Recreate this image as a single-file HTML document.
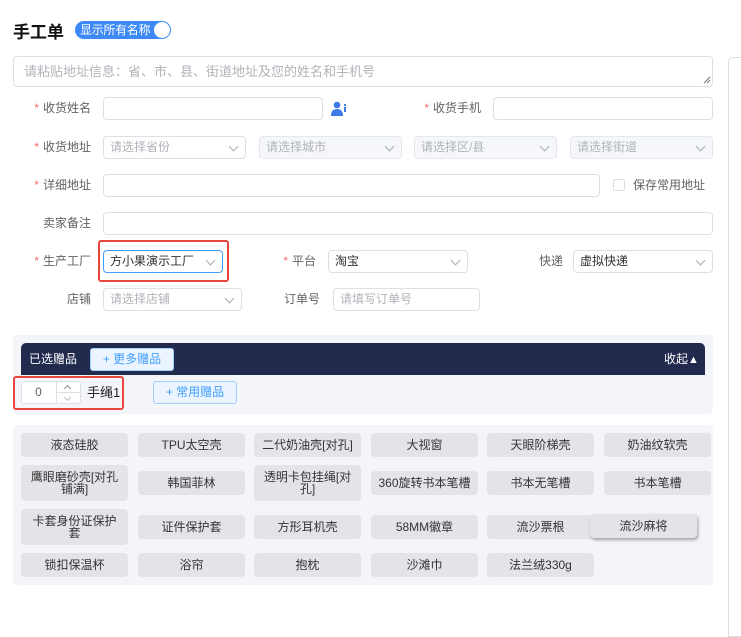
<!DOCTYPE html>
<html><head><meta charset="utf-8"><style>
*{box-sizing:border-box;margin:0;padding:0}
body{width:741px;height:621px;background:#fff;font-family:"Liberation Sans","Noto Sans CJK SC",sans-serif;position:relative;overflow:hidden;color:#606266;font-size:12px}
.a{position:absolute}
.inp{position:absolute;height:23px;border:1px solid #dcdfe6;border-radius:4px;background:#fff;font-size:12px;color:#b0b3b9;padding-left:6px;line-height:21px}
.dis{background:#f5f7fa;border-color:#e4e7ed}
.arr{position:absolute;right:8px;top:6px;width:7px;height:7px;border-right:1px solid #a8abb2;border-bottom:1px solid #a8abb2;transform:rotate(45deg)}
.lbl{position:absolute;text-align:right;font-size:12px;color:#606266;line-height:23px}
.lbl b{color:#f56c6c;font-weight:normal;margin-right:4px}
.tag{position:absolute;width:107px;background:#e3e4e9;border-radius:4px;font-size:12px;color:#333;display:flex;align-items:center;justify-content:center;text-align:center;line-height:12px;padding:0 6px}
.btn{position:absolute;height:23px;background:#ecf5ff;border:1px solid #a0cfff;border-radius:3px;color:#409eff;font-size:12px;text-align:center;line-height:21px}
</style></head><body>
<div class="a" style="left:13px;top:18px;font-size:17px;font-weight:bold;color:#111">手工单</div>
<div class="a" style="left:75px;top:21px;width:96px;height:18px;background:#3d8af7;border-radius:9px;color:#fff;font-size:12px;line-height:18px;padding-left:5px;letter-spacing:-0.3px">显示所有名称</div>
<div class="a" style="left:154px;top:22px;width:16px;height:16px;border-radius:50%;background:#fff"></div>

<div class="inp" style="left:13px;top:56px;width:700px;height:31px;line-height:29px;font-size:13px;padding-left:10px">请粘贴地址信息：省、市、县、街道地址及您的姓名和手机号</div>
<svg class="a" style="left:703px;top:76px" width="8" height="8"><path d="M1 7L7 1M4 7L7 4" stroke="#777" stroke-width="1"/></svg>
<div class="a" style="left:728px;top:57px;width:20px;height:580px;border:1px solid #dcdfe6;border-radius:5px 0 0 0"></div>

<div class="lbl" style="left:0;width:91px;top:97px"><b>*</b>收货姓名</div>
<div class="inp" style="left:103px;top:97px;width:220px"></div>
<svg class="a" style="left:331px;top:101px" width="16" height="16" viewBox="0 0 16 16"><circle cx="6" cy="4" r="3.3" fill="#3d7be8"/><path d="M0 15 Q0 8 6 8 Q12 8 12 15Z" fill="#3d7be8"/><rect x="13" y="3" width="2" height="2" fill="#3d7be8"/><rect x="13" y="6" width="2" height="5" fill="#3d7be8"/></svg>
<div class="lbl" style="left:400px;width:81px;top:97px"><b>*</b>收货手机</div>
<div class="inp" style="left:493px;top:97px;width:220px"></div>

<div class="lbl" style="left:0;width:91px;top:136px"><b>*</b>收货地址</div>
<div class="inp" style="left:103px;top:136px;width:143px">请选择省份<i class="arr"></i></div>
<div class="inp dis" style="left:259px;top:136px;width:143px">请选择城市<i class="arr"></i></div>
<div class="inp dis" style="left:414px;top:136px;width:143px">请选择区/县<i class="arr"></i></div>
<div class="inp dis" style="left:570px;top:136px;width:143px">请选择街道<i class="arr"></i></div>

<div class="lbl" style="left:0;width:91px;top:174px"><b>*</b>详细地址</div>
<div class="inp" style="left:103px;top:174px;width:497px"></div>
<div class="a" style="left:613px;top:179px;width:12px;height:12px;border:1px solid #dcdfe6;border-radius:2px"></div>
<div class="a" style="left:633px;top:174px;line-height:23px">保存常用地址</div>

<div class="lbl" style="left:0;width:91px;top:212px">卖家备注</div>
<div class="inp" style="left:103px;top:212px;width:610px"></div>

<div class="lbl" style="left:0;width:91px;top:250px"><b>*</b>生产工厂</div>
<div class="a" style="left:98px;top:240px;width:131px;height:42px;border:2px solid #e8453c;border-radius:3px"></div>
<div class="inp" style="left:103px;top:250px;width:120px;border-color:#409eff;color:#303133">方小果演示工厂<i class="arr"></i></div>
<div class="lbl" style="left:260px;width:56px;top:250px"><b>*</b>平台</div>
<div class="inp" style="left:328px;top:250px;width:140px;color:#303133">淘宝<i class="arr"></i></div>
<div class="lbl" style="left:520px;width:43px;top:250px">快递</div>
<div class="inp" style="left:573px;top:250px;width:140px;color:#303133">虚拟快递<i class="arr"></i></div>

<div class="lbl" style="left:0;width:91px;top:288px">店铺</div>
<div class="inp" style="left:103px;top:288px;width:139px">请选择店铺<i class="arr"></i></div>
<div class="lbl" style="left:260px;width:60px;top:288px">订单号</div>
<div class="inp" style="left:333px;top:288px;width:147px">请填写订单号</div>

<div class="a" style="left:13px;top:335px;width:700px;height:79px;background:#f4f5f9;border-radius:5px"></div>
<div class="a" style="left:21px;top:343px;width:684px;height:32px;background:#222a4e;border-radius:5px 5px 0 0"></div>
<div class="a" style="left:29px;top:343px;line-height:32px;color:#fff">已选赠品</div>
<div class="btn" style="left:90px;top:348px;width:84px">+ 更多赠品</div>
<div class="a" style="left:664px;top:343px;line-height:32px;color:#fff">收起<span style="font-size:11px">▲</span></div>
<div class="a" style="left:13px;top:376px;width:111px;height:34px;border:2px solid #e8453c;border-radius:3px"></div>
<div class="a" style="left:21px;top:381px;width:60px;height:23px;border:1px solid #dcdfe6;border-radius:3px;background:#fff"></div>
<div class="a" style="left:21px;top:381px;width:35px;line-height:23px;text-align:center;color:#606266">0</div>
<div class="a" style="left:56px;top:381px;width:1px;height:23px;background:#dcdfe6"></div>
<div class="a" style="left:57px;top:392px;width:23px;height:1px;background:#dcdfe6"></div>
<div class="a" style="left:65px;top:386px;width:5px;height:5px;border-left:1px solid #888;border-top:1px solid #888;transform:rotate(45deg)"></div>
<div class="a" style="left:65px;top:395px;width:5px;height:5px;border-right:1px solid #bbb;border-bottom:1px solid #bbb;transform:rotate(45deg)"></div>
<div class="a" style="left:87px;top:381px;line-height:23px;color:#222;font-size:13px">手绳1</div>
<div class="btn" style="left:153px;top:381px;width:84px">+ 常用赠品</div>

<div class="a" style="left:13px;top:425px;width:700px;height:160px;background:#f4f5f9;border-radius:5px"></div>
<div class="tag" style="left:21px;top:433px;height:24px">液态硅胶</div>
<div class="tag" style="left:138px;top:433px;height:24px">TPU太空壳</div>
<div class="tag" style="left:254px;top:433px;height:24px">二代奶油壳[对孔]</div>
<div class="tag" style="left:371px;top:433px;height:24px">大视窗</div>
<div class="tag" style="left:487px;top:433px;height:24px">天眼阶梯壳</div>
<div class="tag" style="left:604px;top:433px;height:24px">奶油纹软壳</div>
<div class="tag" style="left:21px;top:465px;height:36px">鹰眼磨砂壳[对孔铺满]</div>
<div class="tag" style="left:138px;top:471px;height:24px">韩国菲林</div>
<div class="tag" style="left:254px;top:465px;height:36px">透明卡包挂绳[对孔]</div>
<div class="tag" style="left:371px;top:471px;height:24px">360旋转书本笔槽</div>
<div class="tag" style="left:487px;top:471px;height:24px">书本无笔槽</div>
<div class="tag" style="left:604px;top:471px;height:24px">书本笔槽</div>
<div class="tag" style="left:21px;top:509px;height:36px">卡套身份证保护套</div>
<div class="tag" style="left:138px;top:515px;height:24px">证件保护套</div>
<div class="tag" style="left:254px;top:515px;height:24px">方形耳机壳</div>
<div class="tag" style="left:371px;top:515px;height:24px">58MM徽章</div>
<div class="tag" style="left:487px;top:515px;height:24px">流沙票根</div>
<div class="tag" style="left:590px;top:514px;height:24px;box-shadow:1px 2px 3px rgba(0,0,0,.35)">流沙麻将</div>
<div class="tag" style="left:21px;top:553px;height:24px">锁扣保温杯</div>
<div class="tag" style="left:138px;top:553px;height:24px">浴帘</div>
<div class="tag" style="left:254px;top:553px;height:24px">抱枕</div>
<div class="tag" style="left:371px;top:553px;height:24px">沙滩巾</div>
<div class="tag" style="left:487px;top:553px;height:24px">法兰绒330g</div>
</body></html>
